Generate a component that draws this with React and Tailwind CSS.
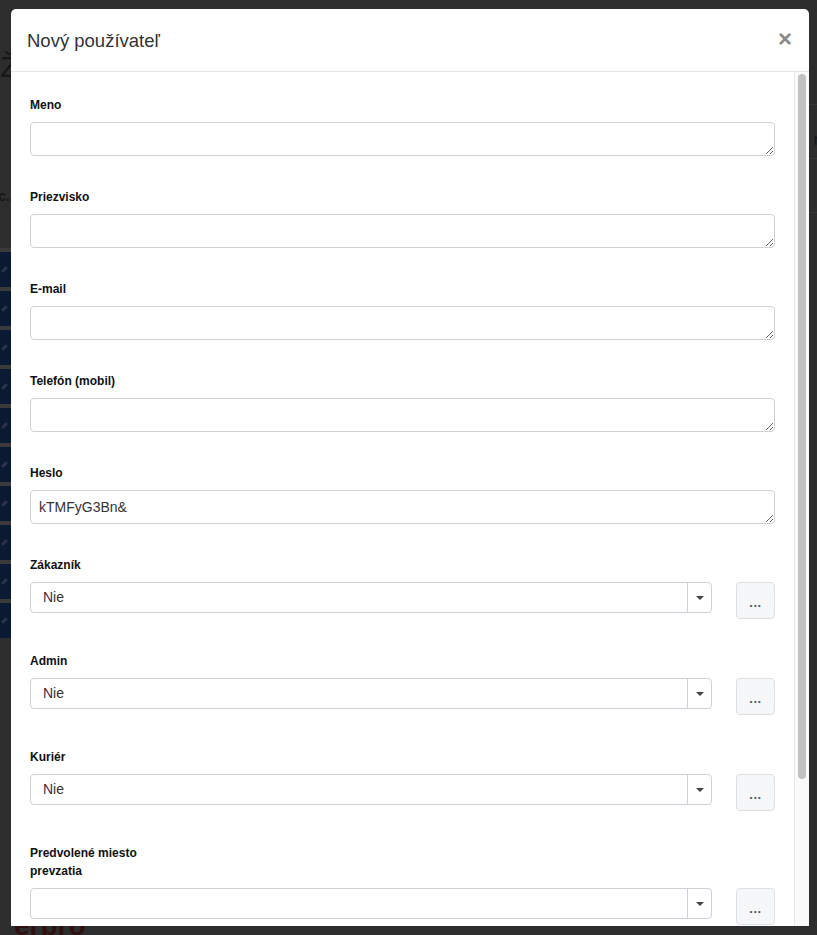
import React from "react";

const font = { fontFamily: '"Liberation Sans", Arial, Helvetica, sans-serif' };

function Label({ children, narrow }) {
  return (
    <div className={`pt-[1px] text-[12px] font-bold leading-[18px] text-[#111] ${narrow ? "w-[130px]" : ""}`}>
      {children}
    </div>
  );
}

function TextGroup({ label, value = "" }) {
  return (
    <div className="mb-[31px]">
      <Label>{label}</Label>
      <textarea
        defaultValue={value}
        className="mt-[8px] block h-[34px] w-full rounded-[4px] border border-[#cdd2d9] bg-white px-[8px] py-[6px] text-[14px] leading-[20px] text-[#333] outline-none"
        style={font}
      />
    </div>
  );
}

function SelectGroup({ label, value = "Nie", narrow, last }) {
  return (
    <div className={last ? "" : "mb-[32px]"}>
      <Label narrow={narrow}>{label}</Label>
      <div className="mt-[8px] flex items-start gap-[24px]">
        <div className="flex h-[31px] flex-1 items-stretch rounded-[4px] border border-[#cdd2d9] bg-white">
          <div className="flex flex-1 items-center pl-[12px] text-[14px] text-[#333]">{value}</div>
          <div className="flex w-[24px] items-center justify-center border-l border-[#cdd2d9]">
            <div className="h-0 w-0 border-x-[4px] border-t-[4px] border-x-transparent border-t-[#444]" />
          </div>
        </div>
        <div className="flex h-[37px] w-[39px] items-center justify-center rounded-[4px] border border-[#dcdfe3] bg-[#f6f7f9] pt-[4px] text-[13px] font-bold tracking-[0.5px] text-[#555]">
          ...
        </div>
      </div>
    </div>
  );
}

function Backdrop() {
  const rows = [];
  for (let i = 0; i < 10; i++) rows.push(i);
  return (
    <div className="absolute inset-0">
      <div className="absolute left-0 top-[52px] text-[30px] leading-none text-[#171717]" style={font}>Ž</div>
      <div className="absolute left-[-2px] top-[186px] text-[14px] font-bold text-[#171717]" style={font}>c..</div>
      <div className="absolute left-0 top-[248px] flex w-[12px] flex-col">
        {rows.map((i) => (
          <div key={i} className="flex h-[39px] flex-col">
            <div className="h-[4px] bg-[#3a3a3a]" />
            <div className="flex flex-1 items-center justify-start bg-[#0a1a32]">
              <div className="ml-[1px] h-[3px] w-[7px] -rotate-45 rounded-[1px] bg-[#2b3448]" />
            </div>
          </div>
        ))}
      </div>
      <div className="absolute right-0 top-[104px] h-px w-[10px] bg-[#383838]" />
      <div className="absolute right-0 top-[158px] h-px w-[10px] bg-[#383838]" />
      <div className="absolute right-0 top-[212px] h-px w-[10px] bg-[#383838]" />
      <div className="absolute right-[-2px] top-[128px] text-[16px] text-[#151515]" style={font}>r</div>
      <div className="absolute left-[14px] top-[912px] text-[28px] font-bold leading-none text-[#2e1010]" style={font}>erpro</div>
    </div>
  );
}

export default function App() {
  return (
    <div className="relative h-[935px] w-[817px] overflow-hidden bg-[#2d2d2d]" style={font}>
      <Backdrop />
      <div className="relative z-10 ml-[11px] mt-[9px] flex h-[917px] w-[798px] flex-col overflow-hidden rounded-t-[5px] bg-white">
        <div className="flex h-[63px] shrink-0 items-center justify-between border-b border-[#e5e5e5] pl-[16px] pr-[17px]">
          <div className="pt-[1px] text-[18.5px] text-[#333]">Nový používateľ</div>
          <div className="pb-[3px] text-[24px] font-bold leading-none text-[#8a8a8a]">×</div>
        </div>
        <div className="flex min-h-0 flex-1">
          <div className="min-w-0 flex-1 overflow-hidden px-[19px] pt-[23px]">
            <TextGroup label="Meno" />
            <TextGroup label="Priezvisko" />
            <TextGroup label="E-mail" />
            <TextGroup label="Telefón (mobil)" />
            <TextGroup label="Heslo" value="kTMFyG3Bn&" />
            <SelectGroup label="Zákazník" />
            <SelectGroup label="Admin" />
            <SelectGroup label="Kuriér" />
            <SelectGroup label="Predvolené miesto prevzatia" value="" narrow last />
          </div>
          <div className="flex w-[15px] shrink-0 justify-center border-l border-[#e8e8e8] bg-[#fafafa] pt-[2px]">
            <div className="h-[705px] w-[8px] rounded-full bg-[#c1c1c1]" />
          </div>
        </div>
      </div>
    </div>
  );
}
